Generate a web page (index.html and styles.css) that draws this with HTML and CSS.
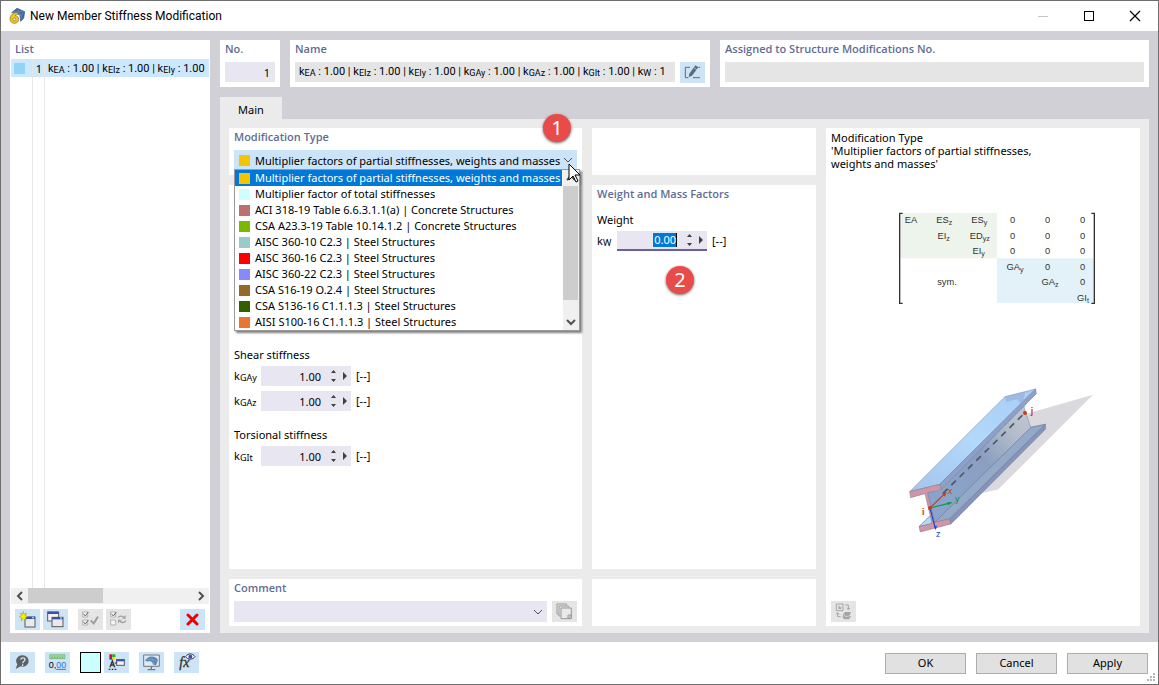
FILE: index.html
```html
<!DOCTYPE html>
<html lang="en">
<head>
    <meta charset="UTF-8">
    <meta name="viewport" content="width=device-width, initial-scale=1.0">
    <title>New Member Stiffness Modification</title>
    <link rel="stylesheet" href="styles.css">
</head>
<body>

<div class="window">

    <!-- Title bar -->
    <header class="titlebar">
        <svg class="app-icon" width="16" height="16" viewBox="0 0 48 48">
            <path d="M8 14 24 1l23 10-3 20-9 9-2-18-12-8z" fill="#41699f" stroke="#2c4d80" stroke-width="2"/>
            <path d="M14 10l22 12M24 4l12 18M8 14l32-5M42 11l-6 22" stroke="#9dbbdc" stroke-width="1" fill="none"/>
            <path d="M27 13C12 13 3 22 3 33c0 8 6 13 13 13 8 0 13-5 13-12s-5-11-11-11c2-3 5-4 9-4z" fill="#f3c522" stroke="#7c6a1c" stroke-width="2"/>
            <circle cx="16" cy="34" r="4" fill="#fff" stroke="#7c6a1c" stroke-width="2"/>
        </svg>
        <h1 class="window-title">New Member Stiffness Modification</h1>
        <div class="window-controls">
            <button class="win-btn" aria-label="Minimize" disabled>
                <svg width="12" height="12"><path d="M1 6.500h10" stroke="#c4c4c4"/></svg>
            </button>
            <button class="win-btn" aria-label="Maximize">
                <svg width="12" height="12"><rect x="1.500" y="1.500" width="9" height="9" fill="none" stroke="#000"/></svg>
            </button>
            <button class="win-btn" aria-label="Close">
                <svg width="12" height="12"><path d="M1 1l10 10M11 1L1 11" stroke="#000" stroke-width="1.200"/></svg>
            </button>
        </div>
    </header>

    <main class="workspace">

        <!-- List of modifications -->
        <aside class="card list-card">
            <h2 class="card-title">List</h2>
            <ul class="list">
                <li class="list-row">
                    <span class="list-swatch"></span>
                    <span class="list-no">1</span>
                    <span class="list-name">k<small>EA</small> : 1.00 | k<small>EIz</small> : 1.00 | k<small>EIy</small> : 1.00</span>
                </li>
            </ul>
            <div class="hscroll">
                <button class="scroll-btn" aria-label="Scroll left">
                    <svg width="8" height="10"><path d="M6 1L2 5l4 4" fill="none" stroke="#505050" stroke-width="2"/></svg>
                </button>
                <div class="hscroll-track"><div class="hscroll-thumb"></div></div>
                <button class="scroll-btn" aria-label="Scroll right">
                    <svg width="8" height="10"><path d="M2 1l4 4-4 4" fill="none" stroke="#505050" stroke-width="2"/></svg>
                </button>
            </div>
            <div class="list-tools">
                <button class="tool" aria-label="New">
                    <svg width="17" height="17" viewBox="0 0 51 51">
                        <rect x="18" y="18" width="30" height="30" fill="#e9e9ee" stroke="#5a5a5a" stroke-width="3"/>
                        <rect x="19" y="17" width="29" height="7" fill="#3b4fa8"/>
                        <rect x="39" y="18" width="6" height="4" fill="#9fd0ff"/>
                        <path d="M13 1l2 9 8-4-4 8 8 3-8 3 2 9-7-6-8 6 2-9-7-3 7-4-4-7 7 3z" fill="#f6f000" stroke="#8c8c2a" stroke-width="1.500"/>
                    </svg>
                </button>
                <button class="tool" aria-label="Copy">
                    <svg width="17" height="17" viewBox="0 0 51 51">
                        <rect x="2" y="3" width="33" height="27" fill="#f4f4f8" stroke="#5a5a5a" stroke-width="3"/>
                        <rect x="2" y="2" width="33" height="7" fill="#3b4fa8"/>
                        <rect x="15" y="19" width="33" height="28" fill="#e9e9ee" stroke="#5a5a5a" stroke-width="3"/>
                        <rect x="15" y="18" width="33" height="7" fill="#3b4fa8"/>
                        <rect x="39" y="19" width="6" height="4" fill="#9fd0ff"/>
                    </svg>
                </button>
                <button class="tool tool-off tool-apart" aria-label="Select all" disabled>
                    <svg width="17" height="17" viewBox="0 0 51 51" fill="none">
                        <path d="M2 3h15v15H2zM2 27h15v15H2z" fill="#f4f4f4" stroke="#9a9a9a" stroke-width="2"/>
                        <path d="M4 8l6 7 9-12M4 32l6 7 9-12" stroke="#666" stroke-width="3"/>
                        <path d="M26 28l9 9 13-20" stroke="#a0a0a0" stroke-width="6"/>
                    </svg>
                </button>
                <button class="tool tool-off" aria-label="Invert selection" disabled>
                    <svg width="17" height="17" viewBox="0 0 51 51" fill="none">
                        <path d="M2 3h15v15H2zM2 27h15v15H2z" fill="#f4f4f4" stroke="#9a9a9a" stroke-width="2"/>
                        <path d="M4 8l6 7 9-12" stroke="#666" stroke-width="3"/>
                        <path d="M24 20c5-6 12-5 17-1M48 29c-5 7-12 6-18 2" stroke="#a0a0a0" stroke-width="4"/>
                        <path d="M47 12v11H36zM24 37V26h11z" fill="#a0a0a0"/>
                    </svg>
                </button>
                <button class="tool tool-last" aria-label="Delete">
                    <svg width="13" height="13" viewBox="0 0 13 13"><path d="M2 2l9 9M11 2l-9 9" stroke="#f00000" stroke-width="3" stroke-linecap="round"/></svg>
                </button>
            </div>
        </aside>

        <section class="editor">

            <div class="head-cards">
                <div class="card">
                    <label class="card-title" for="no">No.</label>
                    <input class="field field-no" id="no" type="text" value="1">
                </div>
                <div class="card">
                    <h2 class="card-title">Name</h2>
                    <div class="name-line">
                        <div class="field field-name">k<small>EA</small> : 1.00 | k<small>EIz</small> : 1.00 | k<small>EIy</small> : 1.00 | k<small>GAy</small> : 1.00 | k<small>GAz</small> : 1.00 | k<small>GIt</small> : 1.00 | k<small>W</small> : 1</div>
                        <button class="tool" aria-label="Edit name">
                            <svg width="17" height="15" viewBox="0 0 51 45" fill="none" stroke="#5c6c78" stroke-width="3">
                                <path d="M18 7H4v31h9M27 38h21M43 7h5"/>
                                <path d="M34 1l9 6-19 25-10 4 2-10z" fill="#5c6c78" stroke="none"/>
                                <path d="M30 8l8 6" stroke="#cde4f7" stroke-width="2"/>
                            </svg>
                        </button>
                    </div>
                </div>
                <div class="card">
                    <label class="card-title" for="assigned">Assigned to Structure Modifications No.</label>
                    <input class="field field-off" id="assigned" type="text" readonly>
                </div>
            </div>

            <nav class="tabs"><button class="tab">Main</button></nav>

            <div class="panel">

                <!-- Left column -->
                <div class="column">
                    <div class="card">
                        <label class="card-title" for="modType">Modification Type</label>
                        <div class="combo">
                            <select class="combo-select" id="modType">
                                <option>Multiplier factors of partial stiffnesses, weights and masses</option>
                            </select>
                            <span class="swatch swatch-partial combo-swatch"></span>
                            <svg class="chevron combo-chevron" width="10" height="6"><path d="M1 1l4 4 4-4"/></svg>

                            <!-- Open drop-down -->
                            <div class="popup">
                                <ul class="options" role="listbox" aria-label="Modification Type">
                                    <li class="option option-on" role="option" aria-selected="true"><span class="swatch swatch-partial"></span>Multiplier factors of partial stiffnesses, weights and masses</li>
                                    <li class="option" role="option"><span class="swatch swatch-total"></span>Multiplier factor of total stiffnesses</li>
                                    <li class="option" role="option"><span class="swatch swatch-aci"></span>ACI 318-19 Table 6.6.3.1.1(a) | Concrete Structures</li>
                                    <li class="option" role="option"><span class="swatch swatch-csa-a23"></span>CSA A23.3-19 Table 10.14.1.2 | Concrete Structures</li>
                                    <li class="option" role="option"><span class="swatch swatch-aisc-10"></span>AISC 360-10 C2.3 | Steel Structures</li>
                                    <li class="option" role="option"><span class="swatch swatch-aisc-16"></span>AISC 360-16 C2.3 | Steel Structures</li>
                                    <li class="option" role="option"><span class="swatch swatch-aisc-22"></span>AISC 360-22 C2.3 | Steel Structures</li>
                                    <li class="option" role="option"><span class="swatch swatch-csa-s16"></span>CSA S16-19 O.2.4 | Steel Structures</li>
                                    <li class="option" role="option"><span class="swatch swatch-csa-s136"></span>CSA S136-16 C1.1.1.3 | Steel Structures</li>
                                    <li class="option" role="option"><span class="swatch swatch-aisi"></span>AISI S100-16 C1.1.1.3 | Steel Structures</li>
                                </ul>
                                <div class="vscroll">
                                    <svg width="10" height="16"><path d="M1 10l4-4 4 4" fill="none" stroke="#505050" stroke-width="2"/></svg>
                                    <div class="vscroll-thumb"></div>
                                    <svg width="10" height="16"><path d="M1 6l4 4 4-4" fill="none" stroke="#505050" stroke-width="2"/></svg>
                                </div>
                            </div>

                            <span class="callout callout-1">1</span>
                            <svg class="cursor" width="14" height="21"><path d="M1 1v16l4-4 3 6 2-1-3-6h5z" fill="#fff" stroke="#000"/></svg>
                        </div>
                    </div>

                    <div class="card card-grow factors">
                        <div class="group">
                            <h3 class="group-title">Shear stiffness</h3>
                            <div class="factor">
                                <label class="factor-label" for="kGAy">k<small>GAy</small></label>
                                <div class="spin">
                                    <input class="spin-input" id="kGAy" type="text" value="1.00">
                                    <svg class="spin-arrows" width="16" height="12"><path d="M0 3l2.500-3L5 3zM0 9l2.500 3L5 9zM12 2l4 4-4 4z"/></svg>
                                </div>
                                <span>[--]</span>
                            </div>
                            <div class="factor">
                                <label class="factor-label" for="kGAz">k<small>GAz</small></label>
                                <div class="spin">
                                    <input class="spin-input" id="kGAz" type="text" value="1.00">
                                    <svg class="spin-arrows" width="16" height="12"><path d="M0 3l2.500-3L5 3zM0 9l2.500 3L5 9zM12 2l4 4-4 4z"/></svg>
                                </div>
                                <span>[--]</span>
                            </div>
                        </div>
                        <div class="group">
                            <h3 class="group-title">Torsional stiffness</h3>
                            <div class="factor">
                                <label class="factor-label" for="kGIt">k<small>GIt</small></label>
                                <div class="spin">
                                    <input class="spin-input" id="kGIt" type="text" value="1.00">
                                    <svg class="spin-arrows" width="16" height="12"><path d="M0 3l2.500-3L5 3zM0 9l2.500 3L5 9zM12 2l4 4-4 4z"/></svg>
                                </div>
                                <span>[--]</span>
                            </div>
                        </div>
                    </div>

                    <div class="card">
                        <label class="card-title" for="comment">Comment</label>
                        <div class="name-line">
                            <div class="comment">
                                <select class="comment-select" id="comment"><option></option></select>
                                <svg class="chevron comment-chevron" width="10" height="6"><path d="M1 1l4 4 4-4"/></svg>
                            </div>
                            <button class="tool tool-off" aria-label="Comment library" disabled>
                                <svg width="17" height="17" viewBox="0 0 51 51" fill="none" stroke="#999" stroke-width="3">
                                    <path d="M7 33H3V3h28v4M13 39H9V9h28v4"/>
                                    <path d="M15 15h31v32H15z" fill="#e9e9e9"/>
                                    <path d="M36 36h10v10H36zM36 46l10-10"/>
                                </svg>
                            </button>
                        </div>
                    </div>
                </div>

                <!-- Middle column -->
                <div class="column">
                    <div class="card card-blank"></div>
                    <div class="card card-grow">
                        <h2 class="card-title">Weight and Mass Factors</h2>
                        <div class="group group-weight">
                            <h3 class="group-title">Weight</h3>
                            <div class="factor factor-weight">
                                <label class="factor-label" for="kW">k<small>W</small></label>
                                <div class="spin spin-focus">
                                    <input class="spin-input spin-marked" id="kW" type="text" value="0.00">
                                    <svg class="spin-arrows" width="16" height="12"><path d="M0 3l2.500-3L5 3zM0 9l2.500 3L5 9zM12 2l4 4-4 4z"/></svg>
                                </div>
                                <span>[--]</span>
                                <span class="callout callout-2">2</span>
                            </div>
                        </div>
                    </div>
                    <div class="card card-blank"></div>
                </div>

                <!-- Right column: explanation -->
                <div class="card info">
                    <p class="info-text">Modification Type<br>'Multiplier factors of partial stiffnesses,<br>weights and masses'</p>
                    <div class="figures">
                        <svg class="matrix" width="204" height="100" viewBox="228 270 612 300">
                            <path d="M241 279h290v136H241z" fill="#edf4ec"/>
                            <path d="M531 415h290v134H531z" fill="#e3f2f9"/>
                            <path d="M248 280h-9v270h9M814 280h9v270h-9" fill="none" stroke="#333" stroke-width="4"/>
                            <g class="matrix-text">
                                <text x="273" y="310">EA</text>
                                <text x="373" y="310">ES<tspan class="matrix-sub" dy="5">z</tspan></text>
                                <text x="478" y="310">ES<tspan class="matrix-sub" dy="5">y</tspan></text>
                                <text x="578" y="310">0</text>
                                <text x="683" y="310">0</text>
                                <text x="788" y="310">0</text>
                                <text x="371" y="357">EI<tspan class="matrix-sub" dy="5">z</tspan></text>
                                <text x="479" y="357">ED<tspan class="matrix-sub" dy="5">yz</tspan></text>
                                <text x="578" y="357">0</text>
                                <text x="683" y="357">0</text>
                                <text x="788" y="357">0</text>
                                <text x="476" y="403">EI<tspan class="matrix-sub" dy="5">y</tspan></text>
                                <text x="578" y="403">0</text>
                                <text x="683" y="403">0</text>
                                <text x="788" y="403">0</text>
                                <text x="585" y="450">GA<tspan class="matrix-sub" dy="5">y</tspan></text>
                                <text x="683" y="450">0</text>
                                <text x="788" y="450">0</text>
                                <text x="381" y="496">sym.</text>
                                <text x="690" y="496">GA<tspan class="matrix-sub" dy="5">z</tspan></text>
                                <text x="788" y="496">0</text>
                                <text x="789" y="543">GI<tspan class="matrix-sub" dy="5">t</tspan></text>
                            </g>
                        </svg>

                        <svg class="beam" width="230" height="170" viewBox="-21 0 690 510">
                            <defs>
                                <linearGradient id="top" x1="0" y1="1" x2="1" y2="0">
                                    <stop offset="0" stop-color="#a4c5ec"/>
                                    <stop offset="0.500" stop-color="#b2d8fb"/>
                                    <stop offset="1" stop-color="#a9ccf5"/>
                                </linearGradient>
                                <linearGradient id="web" x1="0" y1="1" x2="1" y2="0">
                                    <stop offset="0" stop-color="#88a6d0"/>
                                    <stop offset="0.550" stop-color="#8b9fc0"/>
                                    <stop offset="0.800" stop-color="#b3bccb"/>
                                    <stop offset="1" stop-color="#c5cad3"/>
                                </linearGradient>
                            </defs>
                            <path d="M180 362L405 103l204-59-284 284z" fill="#dadade"/>
                            <g stroke="#737990" stroke-width="1.500" stroke-linejoin="round">
                                <path d="M87 440l38-37 286-260 55-10-287 284z" fill="#9dbbe4"/>
                                <path d="M108 340l45-10L400 75l22 68-290 286z" fill="url(#web)"/>
                                <path d="M132 429L422 143l44-10-287 284z" fill="#94a9c8"/>
                                <path d="M87 440l38-37 7 27z" fill="#b2d7fb"/>
                                <path d="M179 417l287-284 1 14-285 286z" fill="#8395bd"/>
                                <path d="M59 335L345 50l92-23-288 286z" fill="url(#top)"/>
                                <path d="M149 313L437 27l2 14-285 287z" fill="#8ba1cb"/>
                                <path d="M59 335l90-22 5 15-41 10 21 89 45-11 3 16-91 24-4-16 39-10-21-89-43 12z" fill="#d295a7"/>
                            </g>
                            <path d="M345 50l60-14-3 16-54 14zM381 55l20-5 6 30-8 4z" fill="#8ea5d6" opacity="0.500"/>
                            <path d="M159 340L405 98" stroke="#50566a" stroke-width="5" stroke-dasharray="19 16" fill="none"/>
                            <g fill="none" stroke-width="3.500">
                                <path d="M120 384l42-41" stroke="#cf3b14"/>
                                <path d="M120 384l56-14" stroke="#12954b"/>
                                <path d="M120 384l14 54" stroke="#1746c6"/>
                            </g>
                            <path d="M170 335l-5 15-9-8z" fill="#cf3b14"/>
                            <path d="M188 367l-13 9-3-10z" fill="#12954b"/>
                            <path d="M137 450l-6-11 10-2z" fill="#1746c6"/>
                            <circle cx="120" cy="384" r="6" fill="#cf3b14"/>
                            <circle cx="405" cy="99" r="6" fill="#cf3b14"/>
                            <g class="beam-text">
                                <text x="96" y="405" fill="#cf3b14" class="beam-node">i</text>
                                <text x="422" y="101" fill="#cf3b14" class="beam-node">j</text>
                                <text x="173" y="342" fill="#cf3b14">x</text>
                                <text x="195" y="366" fill="#12954b">y</text>
                                <text x="138" y="471" fill="#1746c6">z</text>
                            </g>
                        </svg>
                    </div>
                    <button class="tool tool-off" aria-label="Switch graphic" disabled>
                        <svg width="17" height="17" viewBox="0 0 51 51" fill="none" stroke="#a5a5a5" stroke-width="3">
                            <path d="M4 3h20v20H4z"/>
                            <path d="M10 8v10h9v-5h-5V8z" fill="#a5a5a5" stroke="none"/>
                            <path d="M31 6h9v13M35 15l5 5 5-5M17 41H8V30M3 34l5-5 5 5"/>
                            <path d="M24 34l6-7h18l-5 12 5 1-6 9H27l-4-6z" fill="#a5a5a5" stroke="none"/>
                            <path d="M26 33l5 8 12-2" stroke="#e4e4e4" stroke-width="2"/>
                        </svg>
                    </button>
                </div>
            </div>
        </section>
    </main>

    <!-- Bottom bar -->
    <footer class="footer">
        <div class="footer-tools">
            <button class="tool" aria-label="Help">
                <svg width="17" height="17" viewBox="0 0 51 51">
                    <path d="M26 4a18 17 0 1 1-6 33L5 45l5-14A17 17 0 0 1 26 4z" fill="#606060"/>
                    <path d="M20 17c1-7 13-7 13 0 0 5-7 5-7 11M26 31v5" stroke="#cde4f7" stroke-width="4" fill="none"/>
                </svg>
            </button>
            <button class="tool" aria-label="Units and decimal places">
                <svg width="19" height="17" viewBox="0 0 57 51">
                    <path d="M5 2h46v12H5z" fill="#9bd59b" stroke="#71b571" stroke-width="2"/>
                    <path d="M12 8v5M20 8v5M28 8v5M36 8v5M44 8v5" stroke="#4e9b4e" stroke-width="2"/>
                    <text x="2" y="42" class="units-text">0,<tspan fill="#3376d6">00</tspan></text>
                    <path d="M25 46h29" stroke="#3376d6" stroke-width="3"/>
                </svg>
            </button>
            <button class="color-btn" aria-label="Color"></button>
            <button class="tool tool-near" aria-label="Display properties">
                <svg width="17" height="17" viewBox="0 0 51 51">
                    <path d="M4 1h9v8H4z" fill="#f00"/><path d="M13 1h9v8h-9z" fill="#13b413"/>
                    <path d="M4 9h9v8H4z" fill="#2546e6"/><path d="M13 9h9v8h-9z" fill="#f7e600"/>
                    <path d="M6 40l7-19 7 19M9 33h8" fill="none" stroke="#333" stroke-width="4"/>
                    <path d="M2 46h24" stroke="#333" stroke-width="4" stroke-dasharray="5 4"/>
                    <rect x="26" y="17" width="23" height="17" fill="#f4f4f8" stroke="#5a5a5a" stroke-width="3"/>
                    <path d="M25 16h25v6H25z" fill="#3b4fa8"/>
                    <path d="M20 27h7" stroke="#333" stroke-width="3"/>
                </svg>
            </button>
            <button class="tool" aria-label="View settings">
                <svg width="17" height="17" viewBox="0 0 51 51">
                    <path d="M2 3h47v34H2z" fill="#dfeaf3" stroke="#777" stroke-width="3"/>
                    <path d="M25 37v9M14 47h23" stroke="#777" stroke-width="4"/>
                    <path d="M7 20C14 6 34 4 44 17l-5 16-9-2c0-8-8-12-15-9z" fill="#5385b5" stroke="#39678f"/>
                    <path d="M15 14l20 17M25 8l9 23M7 20c12-7 26-6 35 2" stroke="#8db5d6" stroke-width="1.500" fill="none"/>
                </svg>
            </button>
            <button class="tool" aria-label="Formula">
                <svg width="19" height="18" viewBox="0 0 57 54">
                    <text x="7" y="42" class="formula-text">fx</text>
                    <path d="M26 11c7-11 20-11 28 0-8 10-21 10-28 0z" fill="#fff" stroke="#27295f" stroke-width="3"/>
                    <circle cx="40" cy="11" r="6" fill="#4648a0"/>
                </svg>
            </button>
        </div>
        <div class="dialog-buttons">
            <button class="dialog-btn">OK</button>
            <button class="dialog-btn">Cancel</button>
            <button class="dialog-btn">Apply</button>
        </div>
        <svg class="grip" width="8" height="8"><path d="M6 0h2v2H6zM3 3h2v2H3zM6 3h2v2H6zM0 6h2v2H0zM3 6h2v2H3zM6 6h2v2H6z" fill="#b8b8b8"/></svg>
    </footer>
</div>

</body>
</html>
```

FILE: styles.css
```css
* {
    box-sizing: border-box;
}

body {
    margin: 0;
    font-family: "Noto Sans", "Open Sans", sans-serif;
    font-size: 11px;
    line-height: 16px;
    color: #000;
}

h1, h2, h3, p, ul {
    margin: 0;
    padding: 0;
    font-size: inherit;
    font-weight: normal;
    list-style: none;
}

button, input, select {
    font: inherit;
    color: inherit;
    margin: 0;
    padding: 0;
    border: none;
    border-radius: 0;
    outline: none;
}

/* subscripts of the factors */
small {
    font-size: 9px;
    position: relative;
    top: 1px;
}

.window {
    display: flex;
    flex-direction: column;
    height: 100vh;
    border: 1px solid #6e6e6e;
    background: #fff;
}

/* Title bar */
.titlebar {
    display: flex;
    align-items: center;
    height: 30px;
    padding-left: 8px;
    gap: 5px;
}

.window-title {
    flex: 1;
    font-family: Roboto, "Noto Sans", sans-serif;
    font-size: 12px;
}

.window-controls {
    display: flex;
}

.win-btn {
    display: flex;
    align-items: center;
    justify-content: center;
    width: 46px;
    height: 28px;
    background: none;
}

/* Workspace */
.workspace {
    flex: 1;
    display: flex;
    gap: 10px;
    min-height: 0;
    padding: 9px;
    background: #d1d0d6;
}

.card {
    display: flex;
    flex-direction: column;
    min-width: 0;
    padding: 0 5px 5px;
    background: #fff;
}

.card-grow {
    flex: 1;
}

.card-blank {
    height: 47px;
}

.card-title {
    margin-bottom: 4px;
    font-family: "Open Sans", "Noto Sans", sans-serif;
    line-height: 18px;
    font-weight: 600;
    color: #5f6d95;
}

/* List */
.list-card {
    width: 200px;
    padding: 0 1px 3px;
}

.list-card .card-title {
    margin: 0 4px 1px;
}

.list {
    flex: 1;
    background: linear-gradient(#e6e6e6, #e6e6e6) 21px 0 / 1px 100% no-repeat,
                linear-gradient(#e6e6e6, #e6e6e6) 33px 0 / 1px 100% no-repeat;
}

.list-row {
    display: grid;
    grid-template-columns: 21px 11px 1fr;
    column-gap: 1px;
    align-items: center;
    height: 18px;
    white-space: nowrap;
    background: linear-gradient(#e6e6e6, #e6e6e6) 21px 0 / 1px 100% no-repeat,
                linear-gradient(#e6e6e6, #e6e6e6) 33px 0 / 1px 100% no-repeat,
                #cce8ff;
}

.list-swatch {
    width: 11px;
    height: 11px;
    margin-left: 3px;
    background: #90d5f5;
}

.list-no {
    padding: 2px 2px 0 0;
    text-align: right;
}

.list-name {
    padding: 2px 0 0 3px;
}

.list-name,
.field-name {
    font-family: Roboto, "Noto Sans", sans-serif;
}

.hscroll {
    display: flex;
    height: 16px;
    background: #f0f0f0;
}

.scroll-btn {
    display: flex;
    align-items: center;
    justify-content: center;
    width: 17px;
    background: none;
}

.hscroll-track {
    flex: 1;
}

.hscroll-thumb {
    width: 75px;
    height: 15px;
    background: #cdcdcd;
}

.list-tools {
    display: flex;
    gap: 3px;
    padding: 5px 4px 0;
}

.tool {
    display: flex;
    flex: none;
    align-items: center;
    justify-content: center;
    width: 25px;
    height: 21px;
    background: #cde4f7;
}

.tool-off {
    background: #e5e5e5;
}

.tool-apart {
    margin-left: 7px;
}

.tool-last {
    margin-left: auto;
}

/* Editor */
.editor {
    flex: 1;
    display: flex;
    flex-direction: column;
    min-width: 0;
}

.head-cards {
    display: grid;
    grid-template-columns: 60px 420fr 429fr;
    gap: 10px;
    margin-bottom: 10px;
}

.field {
    width: 100%;
    height: 20px;
    padding: 0 4px;
    line-height: 20px;
    background: #e8e7f1;
}

.field-no {
    padding: 2px 5px 0;
    text-align: right;
}

.field-off {
    background: #e5e5e5;
}

.field-name {
    flex: 1;
    min-width: 0;
    padding-right: 0;
    overflow: hidden;
    white-space: nowrap;
    background: #e5e5e5;
}

.name-line {
    display: flex;
    gap: 5px;
    height: 20px;
}

.tabs {
    display: flex;
}

.tab {
    height: 22px;
    padding: 4px 18px 0;
    background: #ebebeb;
}

.panel {
    flex: 1;
    display: grid;
    grid-template-columns: 353fr 224fr 314fr;
    gap: 10px;
    min-height: 0;
    padding: 9px 9px 7px;
    background: #ebebeb;
}

.column {
    display: flex;
    flex-direction: column;
    gap: 10px;
    min-width: 0;
}

/* Modification type combo box */
.combo {
    position: relative;
    height: 20px;
}

.combo-select {
    appearance: none;
    width: 100%;
    height: 20px;
    padding: 2px 0 0 21px;
    background: #cbe4f8;
}

.combo-swatch {
    position: absolute;
    top: 5px;
    left: 5px;
}

.chevron {
    position: absolute;
    fill: none;
    stroke: #505050;
}

.combo-chevron {
    top: 7px;
    right: 4px;
}

.popup {
    position: absolute;
    top: 19px;
    left: 0;
    right: -3px;
    display: flex;
    border: 1px solid #9a9a9a;
    background: #fff;
    box-shadow: 2px 2px 2px rgba(0, 0, 0, 0.5);
    z-index: 1;
}

.options {
    flex: 1;
}

.option {
    display: flex;
    align-items: center;
    gap: 5px;
    height: 16px;
    padding-left: 4px;
    white-space: nowrap;
}

.option-on {
    color: #fff;
    background: #0078d7;
}

.swatch {
    flex: none;
    width: 11px;
    height: 11px;
}

.swatch-partial { background: #f6c300; }
.swatch-total { background: #ccffff; }
.swatch-aci { background: #bc7072; }
.swatch-csa-a23 { background: #7ab900; }
.swatch-aisc-10 { background: #99cbcb; }
.swatch-aisc-16 { background: #ff0000; }
.swatch-aisc-22 { background: #8888ff; }
.swatch-csa-s16 { background: #966928; }
.swatch-csa-s136 { background: #335f00; }
.swatch-aisi { background: #e87534; }

.vscroll {
    display: flex;
    flex-direction: column;
    align-items: center;
    width: 17px;
    padding-right: 1px;
    border-left: 1px solid #fff;
    background: #f0f0f0;
}

.vscroll-thumb {
    width: 100%;
    height: 114px;
    margin-bottom: auto;
    background: #cdcdcd;
}

.cursor {
    position: absolute;
    top: 13px;
    right: -5px;
    z-index: 2;
}

/* Numbered callouts */
.callout {
    position: absolute;
    width: 28px;
    height: 28px;
    border-radius: 50%;
    font-size: 20px;
    line-height: 28px;
    text-align: center;
    color: #fff;
    background: #e94b4b;
    box-shadow: 0 1px 3px rgba(0, 0, 0, 0.6);
    z-index: 3;
}

.callout-1 {
    top: -36px;
    right: 6px;
}

.callout-2 {
    top: 35px;
    left: 69px;
}

/* Factors */
.factors {
    padding-top: 162px;
}

.group {
    margin-bottom: 11px;
}

.group-weight {
    padding-top: 5px;
}

.group-title {
    margin-bottom: 3px;
}

.factor {
    display: flex;
    align-items: center;
    height: 20px;
    margin-bottom: 5px;
}

.factor-label {
    width: 27px;
}

.factor-weight {
    position: relative;
}

.factor-weight .factor-label {
    width: 20px;
}

.spin {
    display: flex;
    align-items: center;
    width: 90px;
    height: 20px;
    margin-right: 5px;
    padding-right: 4px;
    background: #e8e7f1;
}

.spin-input {
    flex: 1;
    min-width: 0;
    margin-right: 10px;
    padding-top: 1px;
    text-align: right;
    background: transparent;
}

.spin-arrows {
    fill: #404040;
}

.spin-focus {
    border-bottom: 2px solid #685fa6;
}

/* value that is selected for typing */
.spin-marked {
    flex: none;
    width: 24px;
    height: 14px;
    margin-left: auto;
    padding: 0;
    color: #fff;
    background: #0078d7;
    border-right: 1px solid #000;
}

/* Comment */
.comment {
    position: relative;
    flex: 1;
}

.comment-select {
    appearance: none;
    width: 100%;
    height: 21px;
    background: #e8e7f1;
}

.comment-chevron {
    top: 8px;
    right: 4px;
}

/* Explanation */
.info {
    padding: 3px 5px 4px;
}

.info-text {
    line-height: 13px;
}

.figures {
    flex: 1;
    display: flex;
    flex-direction: column;
    align-items: center;
    padding: 40px 0 0 30px;
}

.beam {
    margin-top: 70px;
}

.matrix-text {
    font-family: "Liberation Sans", Arial, sans-serif;
    font-size: 28px;
    text-anchor: middle;
    fill: #333;
}

.matrix-sub {
    font-size: 21px;
}

.beam-text {
    font-family: "Liberation Sans", Arial, sans-serif;
    font-size: 27px;
}

.beam-node {
    font-weight: bold;
}

/* Footer */
.footer {
    position: relative;
    display: flex;
    align-items: center;
    justify-content: space-between;
    height: 42px;
    padding: 0 10px 0 9px;
}

.footer-tools {
    display: flex;
    gap: 10px;
    padding-bottom: 2px;
}

.color-btn {
    width: 21px;
    height: 21px;
    border: 1px solid #000;
    background: #ccffff;
}

.tool-near {
    margin-left: -7px;
}

.units-text {
    font-family: "Liberation Sans", Arial, sans-serif;
    font-size: 27px;
}

.formula-text {
    font-family: "Liberation Serif", "Times New Roman", serif;
    font-size: 42px;
    font-style: italic;
    fill: #333;
    stroke: #333;
}

.dialog-buttons {
    display: flex;
    gap: 10px;
}

.dialog-btn {
    width: 81px;
    height: 21px;
    border: 1px solid #adadad;
    background: #e1e1e1;
}

.grip {
    position: absolute;
    right: 3px;
    bottom: 3px;
}
```
